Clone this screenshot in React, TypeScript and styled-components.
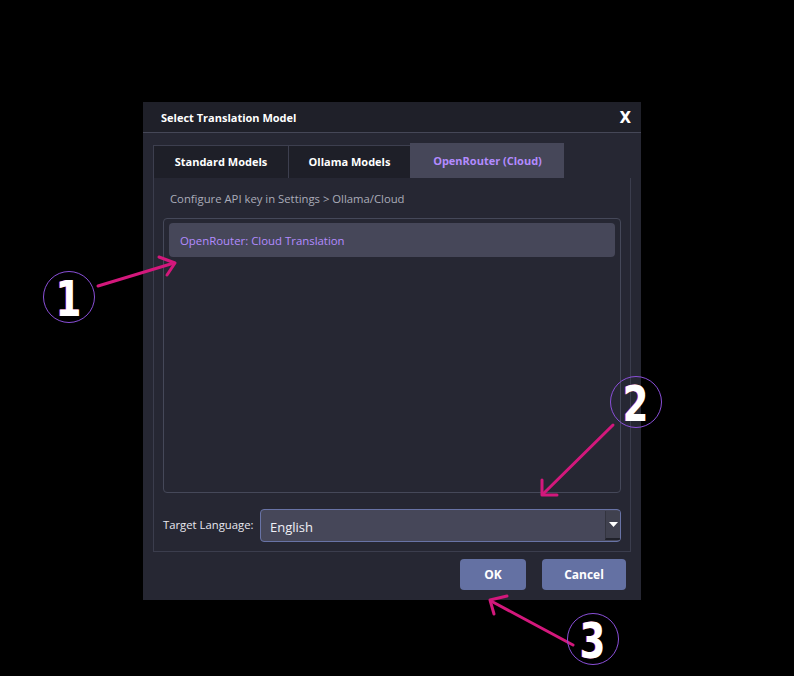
import styled, { createGlobalStyle } from "styled-components";

const GlobalStyle = createGlobalStyle`
  html, body {
    margin: 0;
    padding: 0;
    background: #000;
  }
  * {
    box-sizing: border-box;
  }
`;

const tabs = [
  { label: "Standard Models", width: 135 },
  { label: "Ollama Models", width: 122 },
  { label: "OpenRouter (Cloud)", width: 154 },
];

const activeTab = 2;

const badges = [
  { n: "1", x: 69, y: 297 },
  { n: "2", x: 636, y: 402 },
  { n: "3", x: 593, y: 639 },
];

const App = () => {
  return (
    <Page>
      <GlobalStyle />
      <Dialog>
        <TitleBar>
          <Title>Select Translation Model</Title>
          <Close>X</Close>
        </TitleBar>
        <Body>
          <TabBar>
            {tabs.map((t, i) => (
              <Tab key={t.label} $width={t.width} $active={i === activeTab}>
                {t.label}
              </Tab>
            ))}
          </TabBar>
          <Panel>
            <Hint>Configure API key in Settings &gt; Ollama/Cloud</Hint>
            <ModelList>
              <ModelItem>OpenRouter: Cloud Translation</ModelItem>
            </ModelList>
            <LangRow>
              <LangLabel>Target Language:</LangLabel>
              <Select>
                <SelectValue>English</SelectValue>
                <SelectButton>
                  <svg width="9" height="5" viewBox="0 0 9 5">
                    <path d="M0 0h9L4.5 5z" fill="#fff" />
                  </svg>
                </SelectButton>
              </Select>
            </LangRow>
          </Panel>
          <Footer>
            <Button>OK</Button>
            <Button $wide>Cancel</Button>
          </Footer>
        </Body>
      </Dialog>

      {/* callout arrows */}
      <Overlay width="794" height="676" viewBox="0 0 794 676">
        <g
          stroke="#d3187c"
          strokeWidth="3"
          strokeLinecap="round"
          strokeLinejoin="round"
          fill="none"
        >
          <path d="M98 286L174 263" />
          <path d="M159 257L175 263L167 275" />
          <path d="M613 425L543 494" />
          <path d="M542 480L542 495L557 495" />
          <path d="M573 645L491 601" />
          <path d="M507 596L490 600L494 614" />
        </g>
      </Overlay>

      {badges.map((b) => (
        <Badge key={b.n} style={{ left: b.x - 26, top: b.y - 26 }}>
          <BadgeDigit>{b.n}</BadgeDigit>
        </Badge>
      ))}
    </Page>
  );
};

const Page = styled.div`
  position: relative;
  width: 794px;
  height: 676px;
  background: #000;
  padding: 102px 0 0 143px;
  font-family: "Open Sans", "Noto Sans", sans-serif;
`;

const Dialog = styled.div`
  width: 498px;
  height: 498px;
  background: #262733;
  display: flex;
  flex-direction: column;
`;

const TitleBar = styled.div`
  height: 31px;
  background: #1f2029;
  border-bottom: 1px solid #454757;
  display: flex;
  align-items: center;
  justify-content: space-between;
  padding: 0 10px 0 18px;
`;

const Title = styled.div`
  color: #fff;
  font-size: 11px;
  font-weight: 700;
`;

const Close = styled.div`
  color: #fff;
  font-family: "DejaVu Sans", sans-serif;
  font-size: 15px;
  font-weight: 700;
  padding-top: 2px;
`;

const Body = styled.div`
  padding: 10px 10px 0;
  display: flex;
  flex-direction: column;
`;

const TabBar = styled.div`
  display: flex;
  align-items: flex-end;
  height: 35px;
`;

const Tab = styled.div<{ $width: number; $active?: boolean }>`
  width: ${(p) => p.$width}px;
  height: ${(p) => (p.$active ? 35 : 33)}px;
  background: ${(p) => (p.$active ? "#464759" : "#1e1f28")};
  border-top: 1px solid ${(p) => (p.$active ? "#464759" : "#3d3f4f")};
  border-left: 1px solid ${(p) => (p.$active ? "#464759" : "#3d3f4f")};
  color: ${(p) => (p.$active ? "#b38bff" : "#fff")};
  font-size: 11px;
  font-weight: 700;
  display: flex;
  align-items: center;
  justify-content: center;
  padding-bottom: 1px;
`;

const Panel = styled.div`
  width: 478px;
  height: 374px;
  border: 1px solid #3b3d4d;
  border-top: none;
  padding: 0 9px;
  display: flex;
  flex-direction: column;
`;

const Hint = styled.div`
  color: #aaacb9;
  font-size: 11.3px;
  padding: 13px 0 0 7px;
  height: 40px;
`;

const ModelList = styled.div`
  height: 275px;
  border: 1px solid #454859;
  border-radius: 4px;
  padding: 4px 5px;
`;

const ModelItem = styled.div`
  height: 34px;
  background: #464759;
  border-radius: 4px;
  color: #b38bff;
  font-size: 11.4px;
  display: flex;
  align-items: center;
  padding-left: 11px;
`;

const LangRow = styled.div`
  display: flex;
  align-items: center;
  margin-top: 16px;
`;

const LangLabel = styled.div`
  color: #e8e8f0;
  font-size: 11.3px;
  width: 97px;
  padding-bottom: 3px;
`;

const Select = styled.div`
  flex: 1;
  height: 33px;
  background: #464759;
  border: 1px solid #6873a6;
  border-radius: 4px;
  display: flex;
  align-items: stretch;
  overflow: hidden;
`;

const SelectValue = styled.div`
  flex: 1;
  color: #f0f0f6;
  font-size: 13px;
  display: flex;
  align-items: center;
  padding: 2px 0 0 9px;
`;

const SelectButton = styled.div`
  width: 15px;
  margin: 1px 0 1px;
  background: #40414f;
  border-left: 1px solid #33343f;
  border-bottom: 2px solid #20212a;
  display: flex;
  align-items: center;
  justify-content: center;
`;

const Footer = styled.div`
  display: flex;
  justify-content: flex-end;
  gap: 16px;
  padding: 7px 5px 0 0;
`;

const Button = styled.div<{ $wide?: boolean }>`
  width: ${(p) => (p.$wide ? 84 : 66)}px;
  height: 31px;
  background: #6471a3;
  border-radius: 4px;
  color: #fff;
  font-size: 12px;
  font-weight: 700;
  display: flex;
  align-items: center;
  justify-content: center;
`;

const Overlay = styled.svg`
  position: absolute;
  left: 0;
  top: 0;
  pointer-events: none;
`;

const Badge = styled.div`
  position: absolute;
  width: 52px;
  height: 52px;
  border: 1.5px solid #8a4fd8;
  border-radius: 50%;
  display: flex;
  align-items: center;
  justify-content: center;
`;

const BadgeDigit = styled.span`
  display: block;
  color: #fff;
  font-family: "DejaVu Sans Condensed", "DejaVu Sans", sans-serif;
  font-weight: 700;
  font-size: 50px;
  line-height: 1;
  text-shadow: -1px 0 0 #e0389a;
  transform: scaleX(0.82);
  padding-top: 3px;
`;

export default App;
